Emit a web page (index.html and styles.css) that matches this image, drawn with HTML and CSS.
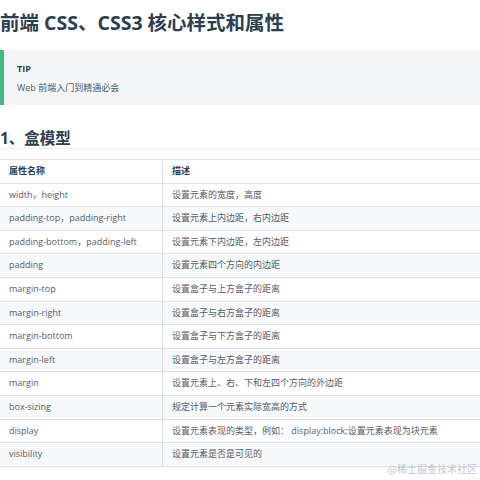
FILE: index.html
```html
<!DOCTYPE html>
<html lang="zh">
<head>
<meta charset="utf-8">
<link rel="stylesheet" href="styles.css">
</head>
<body>
<div class="page">
  <h1 class="title">前端 CSS、CSS3 核心样式和属性</h1>
  <div class="tip">
    <p class="tip-title">TIP</p>
    <p class="tip-text">Web 前端入门到精通必会</p>
  </div>
  <h2 class="section">1、盒模型</h2>
  <table class="props">
    <thead>
      <tr><th class="col-name">属性名称</th><th>描述</th></tr>
    </thead>
    <tbody>
      <tr><td>width，height</td><td>设置元素的宽度，高度</td></tr>
      <tr><td>padding-top，padding-right</td><td>设置元素上内边距，右内边距</td></tr>
      <tr><td>padding-bottom，padding-left</td><td>设置元素下内边距，左内边距</td></tr>
      <tr><td>padding</td><td>设置元素四个方向的内边距</td></tr>
      <tr><td>margin-top</td><td>设置盒子与上方盒子的距离</td></tr>
      <tr><td>margin-right</td><td>设置盒子与右方盒子的距离</td></tr>
      <tr><td>margin-bottom</td><td>设置盒子与下方盒子的距离</td></tr>
      <tr><td>margin-left</td><td>设置盒子与左方盒子的距离</td></tr>
      <tr><td>margin</td><td>设置元素上、右、下和左四个方向的外边距</td></tr>
      <tr><td>box-sizing</td><td>规定计算一个元素实际宽高的方式</td></tr>
      <tr><td>display</td><td>设置元素表现的类型，例如： display:block;设置元素表现为块元素</td></tr>
      <tr><td>visibility</td><td>设置元素是否是可见的</td></tr>
    </tbody>
  </table>
  <div class="watermark">@稀土掘金技术社区</div>
</div>
</body>
</html>
```

FILE: styles.css
```css
html, body {
  margin: 0;
  padding: 0;
  background: #fff;
}
body {
  font-family: "Open Sans", "Noto Sans CJK SC", sans-serif;
  color: #2c3e50;
  width: 480px;
  height: 480px;
  overflow: hidden;
}
.page {
  position: relative;
  height: 480px;
  padding-top: 9px;
  box-sizing: border-box;
}
.title {
  margin: 0;
  font-size: 19.5px;
  line-height: 28px;
  font-weight: 700;
  color: #2c3e50;
}
.tip {
  margin-top: 13px;
  background: #f3f5f7;
  border-left: 4px solid #42b983;
  padding: 11px 13px 6px;
  height: 55px;
  box-sizing: border-box;
}
.tip-title {
  margin: 0;
  font-size: 9px;
  font-weight: 700;
  line-height: 16px;
}
.tip-text {
  margin: 3px 0 0;
  font-size: 9px;
  line-height: 16px;
  color: #4e5b68;
}
.section {
  margin: 23px 0 0;
  font-size: 15.5px;
  line-height: 20px;
  font-weight: 700;
  padding-bottom: 0;
  border-bottom: 1px solid #eaecef;
}
.props {
  margin-top: 10px;
  margin-left: -1px;
  width: 482px;
  border-collapse: collapse;
  font-size: 9px;
}
.props th, .props td {
  border: 1px solid #dfe2e5;
  padding: 4px 9px;
  height: 14.6px;
  line-height: 14.6px;
  text-align: left;
  white-space: nowrap;
}
.props th {
  font-weight: 700;
  color: #2c3e50;
  background: #fff;
}
.props td {
  color: #555d66;
}
.props .col-name {
  width: 144px;
}
.props tbody tr:nth-child(2n) {
  background: #f6f8fa;
}
.watermark {
  position: absolute;
  right: 3px;
  bottom: 4px;
  font-size: 10px;
  color: #c4c7cc;
  font-family: "Noto Sans CJK SC", sans-serif;
}
```
